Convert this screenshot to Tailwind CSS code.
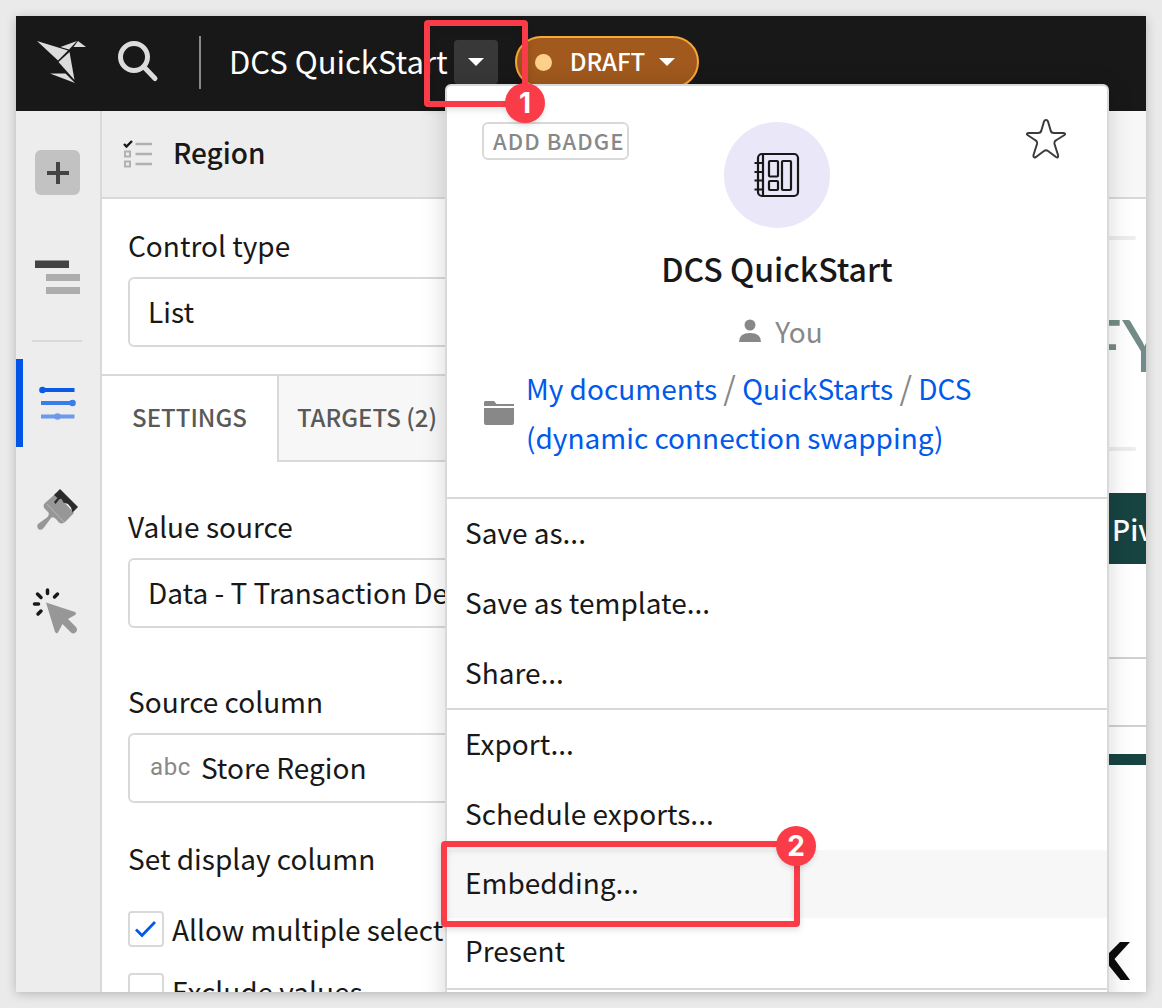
<!DOCTYPE html>
<html lang="en">
<head>
<meta charset="utf-8">
<title>DCS QuickStart</title>
<script src="https://cdn.jsdelivr.net/npm/@tailwindcss/browser@4"></script>
</head>
<body class="bg-[#eaeaea] font-['Noto_Sans_CJK_SC','Noto_Sans',sans-serif] text-[28px] leading-10 text-[#181818]">
<div class="h-screen p-4">
<div class="relative flex h-full flex-col overflow-hidden bg-white shadow-[0_2px_10px_rgba(0,0,0,0.22)]">

  <header class="flex h-[95px] shrink-0 items-center bg-[#181818] pb-[3px] pl-5 text-white">
    <a href="#" aria-label="Home" class="block">
      <svg class="h-12 w-[50px]" viewBox="0 0 50 48" fill="#dcdcdc"><path d="M1 3 L32 12.5 L22 22.5Z"/><path d="M24.5 9 L41 3 L33 11.5Z"/><path d="M42 3 L50 9 L37.5 9Z"/><path d="M33.5 14 L38.500 42 L22.500 24Z"/><path d="M14 35.500 L29.500 35.500 L39 45Z"/><path d="M29 33 L38.500 43.500" stroke="#181818"/></svg>
    </a>
    <button aria-label="Search" class="ml-[31px]">
      <svg class="size-11" viewBox="0 0 44 44" fill="none" stroke="#dcdcdc"><circle cx="17" cy="17" r="13.500" stroke-width="5"/><path d="M27 27 L38 38.500" stroke-width="5" stroke-linecap="round"/></svg>
    </button>
    <div class="ml-[38px] h-[53px] w-0.5 bg-[#888]"></div>
    <h1 class="ml-7 pb-0.5 text-[31px] whitespace-nowrap">DCS QuickStart</h1>
    <button aria-label="Document menu" class="ml-[6px] flex h-11 w-11 items-center justify-center rounded bg-[#383838]">
      <svg class="h-2 w-4" viewBox="0 0 16 8" fill="#fff"><path d="M0 0H16L8 8Z"/></svg>
    </button>
    <button class="ml-[17px] flex h-[52px] w-[184px] items-center rounded-full border-2 border-[#f9a63a] bg-[#a1591d] pl-[18px] text-2xl font-medium">
      <span class="size-[17px] rounded-full bg-[#fdd18b]"></span>
      <span class="ml-[18px] pb-0.5">DRAFT</span>
      <svg class="ml-[14px] h-2 w-4" viewBox="0 0 16 8" fill="#fff"><path d="M0 0H16L8 8Z"/></svg>
    </button>
  </header>

  <div class="flex min-h-0 flex-1">
    <nav class="flex w-[86px] shrink-0 flex-col border-r-2 border-[#d9d9d9] bg-[#ededed] pt-[39px]">
      <button aria-label="Add element" class="ml-[19px] flex size-[45px] items-center justify-center rounded-md bg-[#c2c2c2]">
        <svg class="size-6" viewBox="0 0 24 24" stroke="#444" stroke-width="4"><path d="M12 1V23M1 12H23"/></svg>
      </button>
      <button aria-label="Outline" class="mt-[65px] ml-[19px] h-9 w-[45px]">
        <svg class="h-9 w-[45px]" viewBox="0 0 45 36"><path fill="#444" d="M0 0.500H34V8H0Z"/><path fill="#adadad" d="M11 14H45V21H11ZM11 27H45V34H11Z"/></svg>
      </button>
      <div class="mx-4 mt-11 h-0.5 w-[50px] bg-[#d9d9d9]"></div>
      <button aria-label="Properties" class="mt-[17px] flex h-[88px] items-center border-l-7 border-[#0055e6] pl-4">
        <svg class="h-9 w-[38px]" viewBox="0 0 38 36"><g stroke-width="4"><path stroke="#0b5ae6" d="M3 5H35.500"/><path stroke="#387de9" d="M2 18H33"/><path stroke="#6b9aec" d="M2 31.500H35.500"/></g><circle cx="3.500" cy="5" r="3.300" fill="#0b5ae6"/><circle cx="33.500" cy="18" r="3.300" fill="#387de9"/><circle cx="18.500" cy="31.500" r="3.300" fill="#6b9aec"/></svg>
      </button>
      <button aria-label="Format" class="mt-[40px] ml-5 h-[46px] w-11">
        <svg class="h-[46px] w-11" viewBox="0 0 44 46"><path fill="#979797" d="M18 8 L9 16 Q6 19 9 22 L12.500 25.500 Q13.500 28 11 30.500 L2 37 Q0 40 3 42.500 Q6 43.500 8 40.500 L15 31 Q17 29 20 32 L23 35.500 Q26 37.500 29 35 L38 26 L20 6Z"/><path d="M24 2 L42 20 L36.500 25.500 L35 20.500 L32 17 L27.500 15.500 L25.500 12 L23.500 12 L19.500 17 L18 15 L21.500 11 L18 8Z" fill="#2b2b2b"/><path d="M11 17 L28 35" stroke="#c4c4c4" stroke-width=".7"/></svg>
      </button>
      <button aria-label="Actions" class="mt-[54px] ml-4 h-[48px] w-[46px]">
        <svg class="h-[48px] w-[46px]" viewBox="0 0 46 48"><path stroke="#181818" stroke-width="3.500" stroke-linecap="round" d="M15.500 3V6.500M25.500 7 L22.500 10M5.500 7 L9 10.500M2.500 17H6.500M9 24 L6 27"/><path fill="#979797" d="M14 15.500 L43 25 Q45 26.500 43 28 L36 32 L44 40 Q46 43 44 45 Q42 47.500 39 45.500 L30.500 37 L26 45.500 Q24.500 47 23 45Z"/></svg>
      </button>
    </nav>

    <section class="w-[400px] shrink-0">
      <div class="flex h-[88px] items-center border-b-2 border-[#d9d9d9] bg-[#ededed] pl-[21px]">
        <svg class="h-7 w-[30px]" viewBox="0 0 30 28" fill="none"><path stroke="#181818" stroke-width="2.400" d="M1 4 L3.500 6.500 L9 1"/><path stroke="#b1b1b1" stroke-width="2.500" d="M12.500 4H29M12.500 14H29M12.500 24H29"/><path stroke="#b1b1b1" stroke-width="2" d="M2 11.500H7V16.500H2ZM2 21.500H7V26.500H2Z"/></svg>
        <h2 class="ml-5 pb-1 font-medium">Region</h2>
      </div>
      <div class="flex flex-col gap-3 border-b-2 border-[#d9d9d9] px-[26px] pt-[26px] pb-[27px]">
        <label for="ctl">Control type</label>
        <select id="ctl" class="h-[70px] appearance-none rounded-md border-2 border-[#d9d9d9] bg-white px-[18px] pb-[3px]"><option>List</option></select>
      </div>
      <div class="flex h-[86px] text-2xl font-medium text-[#595959]" role="tablist">
        <button role="tab" class="w-[175px] pb-1">SETTINGS</button>
        <button role="tab" class="flex-1 border-b-2 border-l-2 border-[#d9d9d9] bg-[#f7f7f7] pb-0.5 pl-[18px] text-left">TARGETS (2)</button>
      </div>
      <div class="flex flex-col px-[26px] pt-11">
        <label for="src">Value source</label>
        <select id="src" class="mt-3 h-[70px] appearance-none rounded-md border-2 border-[#d9d9d9] bg-white px-[18px] pb-[3px]"><option>Data - T Transaction Detail</option></select>
        <label for="col" class="mt-[53px]">Source column</label>
        <div class="mt-3 flex h-[70px] items-center rounded-md border-2 border-[#d9d9d9] pb-[3px] pl-5">
          <span class="font-[Roboto,sans-serif] text-2xl tracking-wide text-[#888]">abc</span>
          <select id="col" class="ml-2.5 flex-1 appearance-none bg-transparent"><option>Store Region</option></select>
        </div>
        <p class="mt-[35px]">Set display column</p>
        <label class="mt-[31px] flex items-center gap-2 whitespace-nowrap">
          <span class="relative size-9 shrink-0">
            <input type="checkbox" checked class="block size-9 appearance-none rounded border-2 border-[#d9d9d9]">
            <svg class="pointer-events-none absolute inset-0 size-9" viewBox="0 0 36 36" fill="none" stroke="#0059eb" stroke-width="2.800"><path d="M8 18.500 L14 24.500 L27 11"/></svg>
          </span>Allow multiple selection</label>
        <label class="mt-[22px] flex items-center gap-2 whitespace-nowrap">
          <input type="checkbox" class="block size-9 shrink-0 appearance-none rounded border-2 border-[#d9d9d9]">Exclude values</label>
      </div>
    </section>

    <main class="min-w-0 flex-1 overflow-hidden">
      <div class="h-[88px] border-b-2 border-[#d9d9d9] bg-[#f7f7f7]"></div>
      <div class="mt-[37px] mr-2.5 h-1 rounded-full bg-[#ededed]"></div>
      <div class="-mr-[21px] mt-[60px] flex h-[88px] items-center justify-end font-[Lato,sans-serif] text-7xl text-[#748c87]">FY</div>
      <div class="mt-[59px] mr-2.5 h-1 rounded-full bg-[#ededed]"></div>
      <div class="-mr-14 mt-[42px] flex h-[71px] items-center justify-end bg-[#174341] pr-[21px] font-medium text-white">Pivot</div>
      <div class="mt-[93px] h-0.5 bg-[#d0d0d0]"></div>
      <div class="mt-[66px] h-0.5 bg-[#d0d0d0]"></div>
      <div class="mt-[27px] h-[11px] bg-[#174341]"></div>
      <div class="mt-[177px] mr-4 flex justify-end"><svg class="h-[38px] w-[26px]" viewBox="0 0 26 38" fill="#0c0c0c"><path d="M16 0H26L10.500 17L26 38H16.500L2 20V14Z"/></svg></div>
    </main>
  </div>

  <div role="menu" class="absolute top-[68px] left-[429px] w-[664px] rounded-md border-2 border-[#d9d9d9] bg-white shadow-[0_2px_24px_rgba(0,0,0,0.16)]">
    <div class="h-[413px] border-b-2 border-[#d9d9d9] px-[35px] pt-[33px]">
      <div class="grid grid-cols-[1fr_auto_1fr] items-start">
        <button class="mt-[3px] h-[38px] w-[147px] rounded-md border-2 border-[#d9d9d9] pb-1 pl-[9px] text-left text-[22px] leading-8 font-medium tracking-wider text-[#888]">ADD BADGE</button>
        <div class="mt-[3px] flex size-[106px] items-center justify-center rounded-full bg-[#e9e7f8]">
          <svg class="h-[46px] w-[46px]" viewBox="0 0 46 46" fill="none" stroke="#181818" stroke-width="2.200"><rect x="4" y="2" width="40" height="42" rx="4"/><path d="M9 2V44M0.500 11H9M0.500 20H9M0.500 28.500H9M0.500 37.500H9"/><rect x="15" y="9" width="9" height="15.500" rx="1"/><rect x="15" y="29" width="9" height="9" rx="1"/><rect x="28" y="9" width="9" height="29" rx="1"/></svg>
        </div>
        <button aria-label="Add to favorites" class="mr-[5px] justify-self-end">
          <svg class="block h-10 w-[42px]" viewBox="0 0 42 40" fill="none" stroke="#3b3b3b" stroke-width="2" stroke-linejoin="round"><path d="M21 1 Q22.500 1 23 2.500 L25.500 11 Q26 14 29 14 L38.500 14 Q41 14.500 39.500 16 L31.500 21 Q29 22 29.500 25 L33 36 Q33.500 39.500 31 38 L23 32 Q21 30.500 19 32 L11 38 Q8 39.500 8.500 36 L12 25 Q12.500 22 10 21 L2.500 16 Q1 14.500 3.500 14 L13 14 Q16 14 16.500 11 L19 2.500 Q19.500 1 21 1Z"/></svg>
        </button>
      </div>
      <h2 class="mt-5 text-center text-[32px] font-medium">DCS QuickStart</h2>
      <p class="mt-[23px] flex items-center justify-center gap-[14px] pl-2 text-[#888]">
        <svg class="h-6 w-[22px]" viewBox="0 0 22 24" fill="#888"><circle cx="11" cy="6" r="5.500"/><path d="M0 23 Q0 14 11 14 T22 23Z"/></svg>You</p>
      <div class="mt-[13px] flex items-center gap-3 pl-0.5">
        <svg class="h-6 w-[30px] shrink-0" viewBox="0 0 30 24" fill="#888"><path d="M1 0H10L12.500 3H30V5H0V1ZM0 7H30V22Q30 24 28 24H2Q0 24 0 22Z"/></svg>
        <nav class="leading-[49px] text-[#0059eb]"><a href="#">My documents</a> <span class="text-[32px] leading-none text-[#888]">/</span> <a href="#">QuickStarts</a> <span class="text-[32px] leading-none text-[#888]">/</span> <a href="#">DCS<br>(dynamic connection swapping)</a></nav>
      </div>
    </div>
    <div class="flex flex-col border-b-2 border-[#d9d9d9]">
      <button role="menuitem" class="h-[70px] pb-1 pl-[18px] text-left">Save as...</button>
      <button role="menuitem" class="h-[70px] pb-1 pl-[18px] text-left">Save as template...</button>
      <button role="menuitem" class="h-[69px] pb-1 pl-[18px] text-left">Share...</button>
    </div>
    <div class="flex flex-col border-b-2 border-[#d9d9d9] pb-0.5">
      <button role="menuitem" class="h-[70px] pb-1 pl-[18px] text-left">Export...</button>
      <button role="menuitem" class="h-[70px] pb-1 pl-[18px] text-left">Schedule exports...</button>
      <button role="menuitem" class="h-[68px] bg-[#f7f7f7] pb-1 pl-[18px] text-left">Embedding...</button>
      <button role="menuitem" class="h-[68px] pb-1 pl-[18px] text-left">Present</button>
    </div>
    <div class="h-10"></div>
  </div>

  <div class="absolute top-1 left-[408px] h-[87px] w-[104px] rounded border-6 border-[#f93c48] drop-shadow-md"></div>
  <div class="absolute top-[67px] left-[489px] flex size-10 items-center justify-center rounded-full bg-[#f93c48] font-[Inter,sans-serif] font-bold text-white shadow-md">1</div>
  <div class="absolute top-[825px] left-[425px] h-[86px] w-[359px] rounded border-6 border-[#f93c48] drop-shadow-md"></div>
  <div class="absolute top-[810px] left-[760px] flex size-10 items-center justify-center rounded-full bg-[#f93c48] font-[Inter,sans-serif] font-bold text-white shadow-md">2</div>
</div>
</div>
</body>
</html>
